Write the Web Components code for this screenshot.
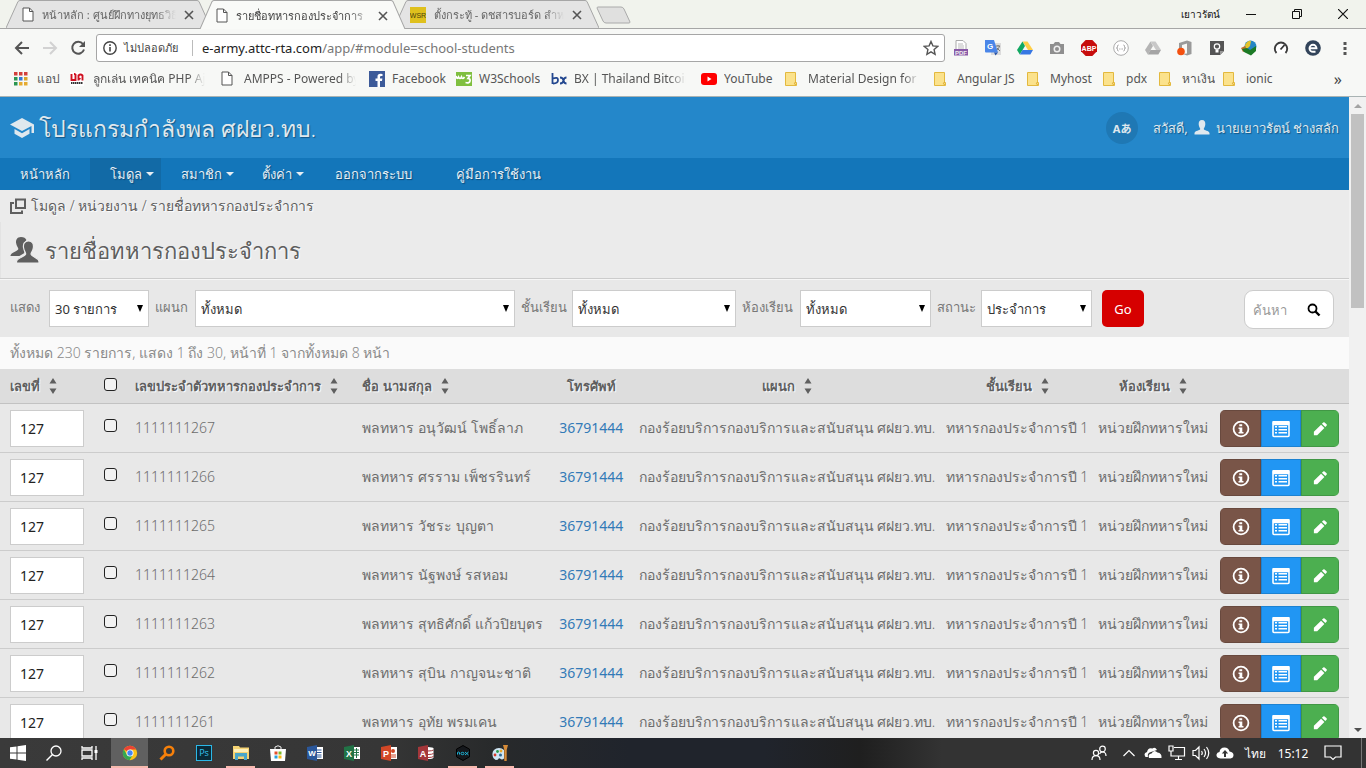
<!DOCTYPE html>
<html lang="th">
<head>
<meta charset="utf-8">
<title>รายชื่อทหารกองประจำการ</title>
<style>
html,body{margin:0;height:100%;overflow:hidden}
body{font-family:"Noto Sans","Open Sans",sans-serif;font-size:12px;color:#5a5a5a}
</style>
</head>
<body>
<desktop-screen>
  <browser-frame slot="window"><school-app></school-app></browser-frame>
  <task-bar slot="taskbar"></task-bar>
</desktop-screen>
<script>
const ICONS = {
 doc:['0 0 12 16','<path d="M1 1h6.5L11 4.5V14H1z" fill="#fff" stroke="#555"/><path d="M7.5 1v3.5H11" fill="none" stroke="#555"/>'],
 wsr:['0 0 16 16','<rect width="16" height="16" fill="#dfc01d"/><text x="8" y="11" font-family="Liberation Sans" font-size="7" text-anchor="middle" fill="#4b420d">WSR</text>'],
 x:['0 0 10 10','<path d="M1 1l8 8M9 1L1 9" stroke="#555" stroke-width="1.6"/>'],
 back:['0 0 16 16','<path d="M15 8H2M8 2L2 8l6 6" fill="none" stroke="#555" stroke-width="2"/>'],
 fwd:['0 0 16 16','<path d="M1 8h13M8 2l6 6-6 6" fill="none" stroke="#d2d2d2" stroke-width="2"/>'],
 reload:['0 0 16 16','<path d="M13 4A6 6 0 1 0 14 9.5" fill="none" stroke="#555" stroke-width="2"/><path d="M15 1v6H9z" fill="#555"/>'],
 info:['0 0 16 16','<circle cx="8" cy="8" r="6.2" fill="none" stroke="#444" stroke-width="1.4"/><path d="M7.2 7h1.6v4.5H7.2zM7.2 4.3h1.6V6H7.2z" fill="#444"/>'],
 star:['0 0 16 16','<path d="M8 1.5l1.9 4.4 4.8.5-3.6 3.2 1 4.7L8 11.9l-4.100 2.400 1-4.700L1.300 6.400l4.800-.5z" fill="none" stroke="#555" stroke-width="1.400"/>'],
 pdf:['0 0 16 16','<path d="M3 9V.5h7L13 3.500V9" fill="#fff" stroke="#aaa"/><path d="M5 4h5M5 6h6M5 8h6" stroke="#bbb"/><rect x="1" y="9" width="14" height="6.500" fill="#8a5aa8"/><text x="8" y="14.500" text-anchor="middle" font-family="Liberation Sans" font-weight="bold" font-size="6" fill="#eee">PDF</text>'],
 gtr:['0 0 16 16','<rect x="6" y="3" width="10" height="12" fill="#dcdcdc"/><path d="M0 0h9l4 12.500H1a1 1 0 0 1-1-1z" fill="#4a86e8"/><path d="M9 12.500h4L10.500 15.500z" fill="#2a56a8"/><text x="5" y="9" text-anchor="middle" font-family="Liberation Sans" font-weight="bold" font-size="8" fill="#fff">G</text><path d="M11 6h4M13 5v1M14.500 6c-.4 2-1.500 3-2.500 4M12 8l3 3" stroke="#777" fill="none"/>'],
 drive:['0 0 16 16','<path d="M5.500 1.500h5L16 10h-5z" fill="#ffcf48"/><path d="M5.500 1.500L8 6 2.800 14.500 0 10z" fill="#11a861"/><path d="M5.500 10H16l-2.700 4.500H2.800z" fill="#3777e3"/>'],
 driveg:['0 0 16 16','<path d="M5.500 1.500h5L16 10h-5z" fill="#c8c8c8"/><path d="M5.500 1.500L8 6 2.800 14.500 0 10z" fill="#b4b4b4"/><path d="M5.500 10H16l-2.700 4.500H2.800z" fill="#a5a5a5"/>'],
 cam:['0 0 16 16','<path d="M1 4h3.500L6 2h4l1.500 2H15v10H1z" fill="#8f8f8f"/><circle cx="8" cy="9" r="3.500" fill="#eee"/><circle cx="8" cy="9" r="2" fill="#8f8f8f"/>'],
 abp:['0 0 16 16','<path d="M4.700 0h6.600L16 4.700v6.600L11.300 16H4.700L0 11.300V4.700z" fill="#c70d0d"/><text x="8" y="10.500" text-anchor="middle" font-family="Liberation Sans" font-weight="bold" font-size="7" fill="#fff">ABP</text>'],
 json:['0 0 16 16','<circle cx="8" cy="8" r="7.300" fill="#fff" stroke="#aaa"/><path d="M5.500 5Q4.500 5 4.500 6.500T3.500 8Q4.500 8 4.500 9.500T5.500 11M10.500 5q1 0 1 1.500T12.500 8q-1 0-1 1.500t-1 1.500M6.300 9h.8M7.700 9h.8M9.100 9h.8" fill="none" stroke="#999"/>'],
 office:['0 0 16 16','<path d="M2 3L10 .5 14.500 2v12L10 15.500 6 14l4-.5V3.500L5 5v6H2z" fill="#9a9a9a"/><circle cx="4" cy="11.500" r="3.800" fill="#f4500f"/>'],
 bulb:['0 0 16 16','<path d="M1 1h14v10l-4 4H1z" fill="#555"/><path d="M15 11l-4 4v-4z" fill="#999"/><circle cx="8" cy="6.500" r="2.700" fill="none" stroke="#fff" stroke-width="1.200"/><path d="M6.500 9.500h3V12.500h-3z" fill="#fff"/>'],
 idm:['0 0 16 16','<circle cx="9.500" cy="6.500" r="6" fill="#2586c6"/><path d="M4 5q3-5 6-4l-1 5-4 4z" fill="#e4c42c"/><path d="M0 8l4-2 2 4-4 2z" fill="#c0702a"/><path d="M1 9l5-1 3 2 6-4v5l-5 4.500L3 12z" fill="#1c7a25"/>'],
 gauge:['0 0 16 16','<circle cx="8" cy="8" r="6" fill="#fff"/><path d="M3.500 13a6.200 6.200 0 1 1 9 0" fill="none" stroke="#3c3c3c" stroke-width="1.900"/><path d="M7.500 9.500L11.500 5" stroke="#333" stroke-width="1.800"/>'],
 ecirc:['0 0 16 16','<circle cx="8" cy="8" r="7.800" fill="#32445a"/><path d="M4.500 8.300h7A3.500 3.500 0 1 0 8 11.800h2.500" fill="none" stroke="#fff" stroke-width="1.900"/>'],
 dots:['0 0 16 16','<path d="M6.500 2h3v3h-3zM6.500 7h3v3h-3zM6.500 12h3v3h-3z" fill="#555"/>'],
 apps:['0 0 14 14','<path d="M0 0h3.500v3.500H0zM5 0h3.500v3.500H5zM10 0h3.500v3.500H10z" fill="#d2403c"/><path d="M0 5h3.500v3.500H0z" fill="#2a9650"/><path d="M5 5h3.500v3.500H5z" fill="#3577d2"/><path d="M10 5h3.500v3.500H10z" fill="#d6a32c"/><path d="M0 10h3.500v3.500H0z" fill="#2a9650"/><path d="M5 10h3.500v3.500H5zM10 10h3.500v3.500H10z" fill="#e5ab31"/>'],
 nxx:['0 0 14 14','<rect width="14" height="14" fill="#fff"/><path d="M1.500 2v6h4V2M4 2h1.500M8.500 8.500V3.500q2-2 4 0V8.500M8.500 6l2 1" fill="none" stroke="#cf1020" stroke-width="1.900"/><path d="M1 11h12" stroke="#333" stroke-width="2" stroke-dasharray="1.500 .5"/>'],
 fb:['0 0 16 16','<rect width="16" height="16" fill="#3c5a99"/><path d="M11 16V10h2l.4-2.400H11V6q0-1 1.200-1h1.300V3Q8.500 2 8.500 5.500v2.100h-2V10h2v6z" fill="#fff"/>'],
 w3:['0 0 16 14','<rect width="16" height="14" fill="#7fbf3f"/><path d="M0 4q1 4 2.500 1 1.500 3 3 0 1 3 3 0M10 3.500h4l-2 3q2.500 0 2 2.500t-4.500 1.500" fill="none" stroke="#fff" stroke-width="1.700"/>'],
 bx:['0 0 16 16','<path d="M1.500 2v11M2 7.500q5-2 5 1.500t-5 3.500M9 6.500q3 0 3.500 3t3 3M15.500 6.500q-2.500 0-3 3t-3.500 3" fill="none" stroke="#23478f" stroke-width="1.800"/>'],
 yt:['0 0 16 14','<rect y="1" width="16" height="12" rx="3" fill="#f00"/><path d="M6.500 4.500v5l4-2.500z" fill="#fff"/>'],
 folder:['0 0 12 14','<path d="M.5.5h10v10h1v3H.5z" fill="#fbe28c" stroke="#e3b93e"/><path d="M10.500 10q-2 1 0 3" fill="none" stroke="#dba726"/>'],
 cap:['0 0 24 20','<path d="M12 0L0 6.500 12 13l9.500-5v7H24V6.500z"/><path d="M4.500 11v4.700L12 20l7.500-4.300V11L12 15.200z"/>'],
 user:['0 0 16 15','<path d="M8 0C5.500 0 4.500 2 4.700 4.500S6 8 6.300 9C6 10.500 1 10.500.500 13v1.500h15V13C15 10.500 10 10.500 9.700 9c.3-1 1.400-2 1.600-4.500S10.500 0 8 0z"/>'],
 windows:['0 0 16 17','<path d="M6 1.500h9v8.500H6z" fill="none" stroke="currentColor" stroke-width="2"/><path d="M4 5H1v10h11V12.500" fill="none" stroke="currentColor" stroke-width="2"/>'],
 users:['0 0 30 27','<path d="M11 0c-4 0-5.300 3-4.900 6s2 4 2.300 6c-.5 2.500-7.500 3-8 7h9l5-3-1-9 3-4C15.500 1 14 0 11 0z"/><path d="M18.500 4c-4 0-5.500 3-5 6.500s2 4.500 2.200 6.500c-.5 3-8.200 3-9.200 7.500V26h22.500v-1.500c-1-4.500-7.500-4.500-8-7.500.3-2 2-3 2.400-6.500S22.500 4 18.500 4z" stroke="#ebebeb" stroke-width="1.200"/>'],
 search:['0 0 14 14','<circle cx="5.500" cy="5.500" r="4" fill="none" stroke="currentColor" stroke-width="1.800"/><path d="M8.500 8.500l4 4" stroke="currentColor" stroke-width="2.400"/>'],
 sort:['0 0 8 16','<path d="M4 0l3.500 5.500h-7zM4 16l3.500-5.500h-7z"/>'],
 caret:['0 0 8 4','<path d="M0 0h8L4 4z"/>'],
 drop:['0 0 6 7','<path d="M0 0h6L3 7z"/>'],
 iinfo:['0 0 18 18','<circle cx="9" cy="9" r="7.400" fill="none" stroke="currentColor" stroke-width="1.800"/><path d="M7.300 4.300h2.900v2H7.300zM6.500 7.500h3.800v4.600h1.200v1.500H6.500v-1.500h1V9h-1z"/>'],
 list:['0 0 18 18','<path d="M1 4.500V15.500a1 1 0 0 0 1 1h14a1 1 0 0 0 1-1V4.500z" fill="none" stroke="currentColor" stroke-width="1.600"/><path d="M.2 2q0-1 1-1h15.600q1 0 1 1v2H.2zM3 6h2v1.500H3zM6.500 6H15v1.500H6.500zM3 9h2v1.500H3zM6.500 9H15v1.500H6.500zM3 12h2v1.500H3zM6.500 12H15v1.500H6.500z"/>'],
 pencil:['0 0 16 16','<path d="M1 11.200L9.200 3 13 6.800 4.800 15H1zM10.200 2l1.500-1.500q.8-.7 1.600 0L15.500 2.700q.7.800 0 1.600L14 5.800z"/>'],
 win:['0 0 16 16','<path d="M0 2.300l6.500-.9V7.500H0zM7.500 1.200L16 0v7.500H7.500zM0 8.500h6.500v6.100L0 13.700zM7.500 8.500H16V16l-8.500-1.200z"/>'],
 find:['0 0 16 16','<circle cx="10" cy="6" r="5" fill="none" stroke="currentColor" stroke-width="1.300"/><path d="M6.500 9.500L.5 15.500" stroke="currentColor" stroke-width="1.400"/>'],
 task:['0 0 18 16','<path d="M1 1v2h10V1M1 15v-2h10v2M1 5h10v6H1zM15 1v14" fill="none" stroke="currentColor" stroke-width="1.300"/><path d="M13.500 5h3v3h-3z"/>'],
 chrome:['0 0 16 16','<circle cx="8" cy="8" r="7.200" fill="#fbc116"/><path d="M8 8L1.800 4.200A7.200 7.200 0 0 1 14.200 4.500H8z" fill="#ea4335"/><path d="M1.800 4.200A7.200 7.200 0 0 0 7.500 15.200L11 9.800 5 10z" fill="#34a853"/><circle cx="8" cy="8" r="3.500" fill="#fff"/><circle cx="8" cy="8" r="2.700" fill="#4285f4"/>'],
 osearch:['0 0 16 16','<circle cx="10" cy="6" r="4.300" fill="none" stroke="#f7800a" stroke-width="2.600"/><path d="M7 9L1.500 14.500" stroke="#f7800a" stroke-width="3"/>'],
 ps:['0 0 16 16','<rect x=".5" y=".5" width="15" height="15" fill="#0b2a38" stroke="#2bb8e8"/><text x="8" y="11" text-anchor="middle" font-family="Open Sans" font-size="9" fill="#35c5f2">Ps</text>'],
 explorer:['0 0 16 16','<path d="M0 1h6l1 1.500h9V14H0z" fill="#f5d373"/><path d="M1 4h14v3H1z" fill="#fff0b8"/><path d="M2 15V8h12v7h-3v-3.500H5V15z" fill="#49a6c9"/>'],
 store:['0 0 16 16','<path d="M5 4V2q3-2.500 6 0v2" fill="none" stroke="#eee"/><path d="M0 4h16l-1 12H1z" fill="#fff"/><path d="M4.500 6.500h3v3h-3z" fill="#e5502c"/><path d="M8.500 6.500h3v3h-3z" fill="#7dba28"/><path d="M4.500 10.500h3v3h-3z" fill="#28a0dd"/><path d="M8.500 10.500h3v3h-3z" fill="#fab914"/>'],
 word:['0 0 16 16','<path d="M8 2h8v12H8z" fill="#fff"/><path d="M10 5h4.500M10 7.500h4.500M10 10h4.500M10 12h4.500" stroke="#2b579a"/><path d="M0 2L10 0v16L0 14z" fill="#2b579a"/><text x="5" y="11" text-anchor="middle" font-family="Liberation Sans" font-weight="bold" font-size="8" fill="#fff">W</text>'],
 excel:['0 0 16 16','<path d="M8 2h8v12H8z" fill="#fff"/><path d="M10 5h5M10 7.500h5M10 10h5M12.500 3v10" stroke="#217346"/><path d="M0 2L10 0v16L0 14z" fill="#217346"/><text x="5" y="11.500" text-anchor="middle" font-family="Liberation Sans" font-weight="bold" font-size="9" fill="#fff">X</text>'],
 ppt:['0 0 16 16','<path d="M8 2h8v12H8z" fill="#fff"/><circle cx="12" cy="6" r="2" fill="#d24726"/><path d="M10 10h5M10 12h5" stroke="#d24726"/><path d="M0 2L10 0v16L0 14z" fill="#d24726"/><text x="5" y="11.500" text-anchor="middle" font-family="Liberation Sans" font-weight="bold" font-size="9" fill="#fff">P</text>'],
 access:['0 0 16 16','<path d="M10 2q5 0 5.500 1.500v9Q15 14 10 14z" fill="#fff"/><path d="M10 6q4 0 5.500-1M10 9.500q4 0 5.500-1M10 12.500q4 0 5.500-1" stroke="#a4373a" fill="none"/><path d="M0 2L10 0v16L0 14z" fill="#a4373a"/><text x="5" y="11.500" text-anchor="middle" font-family="Liberation Sans" font-weight="bold" font-size="9" fill="#fff">A</text>'],
 nox:['0 0 16 16','<path d="M8 .5l6.500 3.700v7.600L8 15.500 1.500 11.800V4.200z" fill="#15181c" stroke="#000"/><path d="M2.500 9.500V7.500q1.500-1 2 0v2M6 8.500a1.500 1.200 0 1 0 3 0 1.500 1.200 0 1 0-3 0M10 7l3.500 3M13.500 7L10 10" fill="none" stroke="#1bb4d8"/>'],
 paint:['0 0 16 16','<path d="M7 3a6.500 6 0 0 0-6.500 7C1 15 5 15.500 6 14.500q1-2 2-1 2 2 4 0V5Q10 3 7 3z" fill="#cfe6f4"/><circle cx="5.500" cy="6.500" r="1.400" fill="#2d9b49"/><circle cx="9" cy="6" r="1.400" fill="#e8a92a"/><circle cx="3" cy="10" r="1.400" fill="#d9392a"/><circle cx="8.500" cy="10" r="1.500" fill="#2f6a95"/><path d="M11 0h5l-1.300 5v11h-2.400V5z" fill="#d58b38"/>'],
 people:['0 0 16 16','<circle cx="11.500" cy="4" r="2.800"/><circle cx="5" cy="8" r="2.600"/><path d="M1 15q0-4.300 4-4.300T9 15M8.500 9q1-2 3-2 3.500 0 3.500 4"/>','s'],
 up:['0 0 14 14','<path d="M1.500 10L7 4.500l5.500 5.500"/>','s'],
 onedrive:['0 0 18 14','<path d="M1.500 11Q-1 7 3 6 4 1 8.500 2.500 11 .500 13 4L7 6q-4 1-3 5z"/><path d="M5 12Q3.500 8 7.500 7.500 10 3 13.500 6.500 18 7 17.500 12z"/>'],
 net:['0 0 18 16','<path d="M6 2.500h10.500v8.500H4M10.500 11v3.500M7 14.500h7M1 1h4v5H1zM3 6v5h2"/>','s'],
 sound:['0 0 18 16','<path d="M1 5.500h2.500L7 2v12l-3.500-3.500H1zM9.500 6q1.500 2 0 4M12 4q3 4 0 8M14.500 2q4.500 6 0 12"/>','s'],
 cloudup:['0 0 18 14','<path d="M4.500 12.500Q0 12 .500 8.500 1 6 3.500 6 4 1.500 8.500 1.500 12.500 1.500 13.500 5.500 17.500 6 17.500 9q0 3-3 3.500z"/><path d="M8 11V7.500H5.800L9 4l3.200 3.500H10V11z" fill="#333"/>'],
 note:['0 0 18 16','<path d="M1 1h16v11h-5.500L9 14.500 6.500 12H1z"/>','s'],
 min:['0 0 10 10','<path d="M0 5.500h10" stroke="#111"/>'],
 max:['0 0 10 10','<path d="M2.500 2.500v-2h7v7h-2M.5 2.500h7v7h-7z" fill="none" stroke="#111"/>'],
 close:['0 0 10 10','<path d="M0 0l10 10M10 0L0 10" stroke="#111" stroke-width="1.200"/>'],
 arrup:['0 0 8 4','<path d="M4 0l4 4H0z"/>']
};
class UiIcon extends HTMLElement{
 connectedCallback(){
  const r=this.shadowRoot||this.attachShadow({mode:'open'});
  const [vb,body,mode]=ICONS[this.getAttribute('name')];
  const [, ,w,h]=vb.split(' ');
  const W=this.getAttribute('w')||w,H=this.getAttribute('h')||h;
  r.innerHTML=`<style>:host{display:inline-flex;flex:none}svg{display:block;fill:currentColor}svg.s{fill:none;stroke:currentColor;stroke-width:1.2}</style><svg class="${mode||''}" aria-hidden="true" width="${W}" height="${H}" viewBox="${vb}">${body}</svg>`;
 }}
customElements.define('ui-icon',UiIcon);

function define(name,html,after){
 const t=document.createElement('template');t.innerHTML=html;
 customElements.define(name,class extends HTMLElement{
  connectedCallback(){
   if(this.shadowRoot)return;
   this.attachShadow({mode:'open'});
   this.shadowRoot.append(t.content.cloneNode(true));
   if(after)after.call(this,this.shadowRoot);
  }});
}

define('desktop-screen',`<style>
:host{display:grid;grid-template-rows:minmax(0,1fr) auto;height:100vh;overflow:hidden}
</style><slot name="window"></slot><slot name="taskbar"></slot>`);

define('browser-tab',`<style>
:host{display:flex;align-items:center;position:relative;isolation:isolate;flex:0 1 205px;min-width:0;height:28px;margin-right:-11px;box-sizing:border-box;padding:2px 17px 0 16px;gap:8px;color:#666;--tab:#e4e4e4}
:host([active]){z-index:2;color:#444;--tab:#f9faf8}
.bg{position:absolute;inset:0;width:100%;height:100%;z-index:-1}
.t{flex:1;min-width:0;white-space:nowrap;overflow:hidden;font-size:11px;line-height:18px;mask-image:linear-gradient(90deg,#000 85%,transparent)}
button{border:0;background:none;padding:0;display:flex}
</style><svg class="bg" viewBox="0 0 205 28" preserveAspectRatio="none" aria-hidden="true"><path d="M0 28L12 1.500Q13 .500 14 .500H191Q192 .500 193 1.500L205 28" fill="var(--tab)" stroke="#a6a6a6"/></svg>
<slot name="icon"></slot><span class="t"><slot></slot></span><button aria-label="ปิดแท็บ"><ui-icon name="x"></ui-icon></button>`);

define('bookmark-item',`<style>
:host{display:block;flex:0 0 auto}
a{display:flex;align-items:center;color:#555;text-decoration:none;font-size:12px;line-height:18px}
.i{display:flex;width:23px;flex:none}
.t{white-space:nowrap;overflow:hidden}
.fade{mask-image:linear-gradient(90deg,#000 85%,transparent)}
</style><a href="#"><span class="i"></span><span class="t"><slot></slot></span></a>`,function(r){
 this.style.width=this.getAttribute('width')+'px';
 r.querySelector('.i').innerHTML=`<ui-icon name="${this.getAttribute('icon')}"></ui-icon>`;
 const t=r.querySelector('.t');
 if(this.hasAttribute('fade')){t.classList.add('fade');t.style.width='112px'}
});

define('browser-frame',`<style>
:host{display:grid;grid-template-rows:29px 37px 31px minmax(0,1fr);min-height:0;background:#f7f8f6;color:#444}
.tabs{display:flex;background:#f1f3ed;border-bottom:1px solid #a6a6a6;padding-left:6px;align-items:stretch;box-sizing:border-box;min-width:0}
.tabs browser-tab[active]{margin-bottom:-1px;height:29px}
.new{margin:6px 0 0 8px;border:0;background:none;padding:0;height:18px}
.sys{margin-left:auto;display:flex;align-items:center;height:28px;padding-right:18px}
.sys button{border:0;background:none;padding:0;display:flex;width:10px;margin-left:36px}
.sys b{font-weight:400;font-size:10px;color:#111;margin-right:-10px}
.bar{display:flex;align-items:center;padding:0 13px 0 14px}
.bar>button{border:0;background:none;padding:0;display:flex;margin-right:12px}
.bar>button:nth-of-type(3){margin-right:10px}
.omni{flex:1;display:flex;align-items:center;height:28px;box-sizing:border-box;border:1px solid #a6a6a6;border-radius:3px;background:#fff;padding:0 5px;min-width:0;font-size:13px;white-space:nowrap}
.omni .safe{margin-left:6px;padding-right:14px;font-size:11px;line-height:16px;border-right:1px solid #bbb}
.omni .url{flex:1;margin-left:9px;color:#777;line-height:20px;font-size:13px}
.url b{font-weight:400;color:#222}
.ext{display:flex;gap:16px;margin-left:8px}
.marks{display:flex;align-items:center;padding:0 24px 4px 14px;border-bottom:1px solid #a9b3b3;overflow:hidden}
.more{margin-left:auto;font-size:16px;line-height:18px}
.view{display:flex;min-height:0}
.page{flex:1;min-width:0;overflow:hidden}
.scroll{flex:0 0 17px;display:grid;grid-template-rows:17px minmax(0,1fr) 17px;background:#f1f1f1;justify-items:center;align-items:center;color:#a3a3a3}
.thumb{align-self:start;width:13px;height:32%;background:#c1c1c1}
.dn{transform:rotate(180deg);color:#505050}
</style>
<div class="tabs"><browser-tab><ui-icon slot="icon" name="doc"></ui-icon>หน้าหลัก : ศูนย์ฝึกทางยุทธวิธี</browser-tab><browser-tab active><ui-icon slot="icon" name="doc"></ui-icon>รายชื่อทหารกองประจำการ</browser-tab><browser-tab><ui-icon slot="icon" name="wsr"></ui-icon>ตั้งกระทู้ - ดชสารบอร์ด สำหรับ</browser-tab>
<button class="new" aria-label="แท็บใหม่"><svg width="35" height="18" viewBox="0 0 35 18" aria-hidden="true"><path d="M1 2Q1 1 2 1h23q2 0 3 2l6 13q0 1-1 1H10q-2 0-3-2z" fill="#e0e0df" stroke="#aaa"/></svg></button>
<div class="sys"><b>เยาวรัตน์</b><button aria-label="ย่อ"><ui-icon name="min"></ui-icon></button><button aria-label="ขยาย"><ui-icon name="max"></ui-icon></button><button aria-label="ปิด"><ui-icon name="close"></ui-icon></button></div></div>
<div class="bar"><button aria-label="ย้อนกลับ"><ui-icon name="back"></ui-icon></button><button aria-label="ไปข้างหน้า"><ui-icon name="fwd"></ui-icon></button><button aria-label="โหลดใหม่"><ui-icon name="reload"></ui-icon></button>
<div class="omni"><ui-icon name="info"></ui-icon><span class="safe">ไม่ปลอดภัย</span><span class="url"><b>e-army.attc-rta.com</b>/app/#module=school-students</span><ui-icon name="star"></ui-icon></div>
<div class="ext"></div></div>
<nav class="marks">
<bookmark-item icon="apps" width="56">แอป</bookmark-item><bookmark-item icon="nxx" width="151" fade>ลูกเล่น เทคนิค PHP Ajax</bookmark-item><bookmark-item icon="doc" width="148" fade>AMPPS - Powered by</bookmark-item><bookmark-item icon="fb" width="87">Facebook</bookmark-item><bookmark-item icon="w3" width="95">W3Schools</bookmark-item><bookmark-item icon="bx" width="150" fade>BX | Thailand Bitcoin E</bookmark-item><bookmark-item icon="yt" width="84">YouTube</bookmark-item><bookmark-item icon="folder" width="149" fade>Material Design for Bo</bookmark-item><bookmark-item icon="folder" width="93">Angular JS</bookmark-item><bookmark-item icon="folder" width="76">Myhost</bookmark-item><bookmark-item icon="folder" width="56">pdx</bookmark-item><bookmark-item icon="folder" width="64">หาเงิน</bookmark-item><bookmark-item icon="folder" width="50">ionic</bookmark-item><span class="more">»</span></nav>
<div class="view"><div class="page"><slot></slot></div><div class="scroll"><ui-icon name="arrup"></ui-icon><div class="thumb"></div><ui-icon class="dn" name="arrup"></ui-icon></div></div>`,function(r){
 r.querySelector('.ext').innerHTML=['pdf','gtr','drive','cam','abp','json','driveg','office','bulb','idm','gauge','ecirc','dots'].map(n=>`<ui-icon name="${n}"></ui-icon>`).join('');
});

define('nav-item',`<style>
:host{display:block;height:32px}
:host([active]){background:#126aa6}
a{display:flex;align-items:center;gap:4px;height:32px;padding-left:20px;color:#e6eef4;text-decoration:none;font-size:13px;line-height:20px;white-space:nowrap;text-shadow:1px 1px 1px #0a4a78}
</style><a href="#"><slot></slot></a>`,function(r){
 if(this.hasAttribute('menu'))r.querySelector('a').insertAdjacentHTML('beforeend','<ui-icon name="caret"></ui-icon>');
 if(this.hasAttribute('width'))this.style.width=this.getAttribute('width')+'px';
});

define('app-header',`<style>
:host{display:block;color:#dfe8ee}
header{display:flex;align-items:center;height:61px;padding:0 10px;background:#2487ca;text-shadow:1px 1px 1px #155786}
h1{display:flex;align-items:center;gap:5px;margin:0;font-weight:300;font-size:23px;line-height:32px;white-space:nowrap}
.lang{margin-left:auto;width:32px;height:32px;border:0;border-radius:50%;background:#1f78b4;color:#dfe8ee;font:bold 11px "Noto Sans","Noto Sans CJK JP",sans-serif;padding:0}
.me{display:flex;align-items:center;gap:6px;margin-left:15px;font-size:13px;line-height:20px;white-space:nowrap;color:inherit}
.me a{display:flex;gap:6px;align-items:center;color:inherit;text-decoration:none}
nav{display:flex;background:#1376ba}
</style><header><h1><ui-icon name="cap"></ui-icon>โปรแกรมกำลังพล ศฝยว.ทบ.</h1><button class="lang">Aあ</button><div class="me">สวัสดี, <a href="#"><ui-icon name="user"></ui-icon>นายเยาวรัตน์ ช่างสลัก</a></div></header>
<nav><nav-item width="90">หน้าหลัก</nav-item><nav-item active menu width="71">โมดูล</nav-item><nav-item menu width="81">สมาชิก</nav-item><nav-item menu width="73">ตั้งค่า</nav-item><nav-item width="121">ออกจากระบบ</nav-item><nav-item>คู่มือการใช้งาน</nav-item></nav>`);

define('filter-select',`<style>
:host{display:flex;gap:5px;flex:none}
label{color:#777;font-size:13px;line-height:34px;white-space:nowrap}
.box{position:relative}
select{appearance:none;width:100%;height:37px;border:1px solid #ccc;border-radius:0;background:#fff;color:#333;padding:0 5px;font:inherit;font-size:13px}
ui-icon{position:absolute;right:6px;top:15px;pointer-events:none;color:#000}
</style><label for="s"></label><div class="box"><select id="s"><option></option></select><ui-icon name="drop"></ui-icon></div>`,function(r){
 const g=n=>this.getAttribute(n);
 r.querySelector('label').textContent=g('label');
 r.querySelector('label').style.width=g('lw')+'px';
 r.querySelector('.box').style.width=g('sw')+'px';
 r.querySelector('option').textContent=g('value');
});

define('filter-bar',`<style>
:host{display:flex;gap:6px;padding:10px 15px 8px 10px;background:#e8e8e8;align-items:flex-start}
.go{width:42px;height:37px;margin-left:4px;border:0;border-radius:5px;background:#d60000;color:#fff;font:inherit;font-size:13px;padding:0}
.search{display:flex;align-items:center;margin-left:auto;width:90px;height:39px;box-sizing:border-box;border:1px solid #ccc;border-radius:9px;background:#fff;padding:0 12px 0 8px}
input{flex:1;min-width:0;border:0;padding:0;background:none;font:inherit;font-size:13px;outline:0}
input::placeholder{color:#999}
.search button{border:0;background:none;padding:0;display:flex;color:#000}
</style>
<filter-select label="แสดง" value="30 รายการ" lw="34" sw="100"></filter-select><filter-select label="แผนก" value="ทั้งหมด" lw="35" sw="320"></filter-select><filter-select label="ชั้นเรียน" value="ทั้งหมด" lw="46" sw="164"></filter-select><filter-select label="ห้องเรียน" value="ทั้งหมด" lw="53" sw="131"></filter-select><filter-select label="สถานะ" value="ประจำการ" lw="39" sw="111"></filter-select><button class="go">Go</button>
<div class="search"><input aria-label="ค้นหา" placeholder="ค้นหา"><button aria-label="ค้นหา"><ui-icon name="search"></ui-icon></button></div>`);

define('student-table',`<style>
:host{display:block}
table{border-collapse:separate;border-spacing:0;table-layout:fixed;width:100%;font-size:14px;font-weight:300;line-height:20px;color:#6c6c6c}
th{height:35px;box-sizing:border-box;background:#ddd;border-bottom:1px solid #c2c2c2;padding:0 8px;font-size:13px;font-weight:600;color:#5f5f5f;text-shadow:1px 1px 1px #fff;white-space:nowrap}
th,td{text-align:center}
th span{display:inline-flex;align-items:center;gap:9px}
td{height:49px;box-sizing:border-box;background:#e8e8e8;border-bottom:1px solid #ccc;padding:0;white-space:nowrap}
.l{text-align:left}
td.l,th.l{padding-left:8px}
td:nth-child(4),th:nth-child(4){padding-left:6px}
tr>:first-child{padding-left:10px;text-align:left}
tr>:nth-child(2){text-align:left;padding:0 0 0 10px}
td:last-child{text-align:left;padding-left:7px}
.n{width:74px;height:37px;box-sizing:border-box;border:1px solid #ccc;background:#fff;padding:0 9px;font:inherit;font-weight:400;color:#222;display:block}
.c{appearance:none;width:13px;height:13px;border:1px solid #222;border-radius:3px;background:#f2f2f2;margin:0 0 4px;display:block}
td .c{margin-bottom:6px}
a{color:#337ab7;text-decoration:none;font-size:14px;font-weight:400}
.g{display:inline-flex;border-radius:5px;overflow:hidden;vertical-align:middle}
.g button{height:37px;border:1px solid #0002;color:#fff;display:flex;align-items:center;justify-content:center;padding:2px 0 0}
.g button:nth-child(1){width:41px;background:#795548}.g button:nth-child(2){width:40px;background:#2196f3}.g button:nth-child(3){width:38px;background:#4caf50}
col:nth-child(1){width:94px}col:nth-child(2){width:33px}col:nth-child(3){width:17%}col:nth-child(4){width:auto}col:nth-child(5){width:6%}col:nth-child(6){width:23%}col:nth-child(7){width:150px}col:nth-child(8){width:121px}col:nth-child(9){width:136px}
</style><table><colgroup><col><col><col><col><col><col><col><col><col></colgroup><thead><tr><th><span>เลขที่<ui-icon name="sort"></ui-icon></span></th><th><input class="c" type="checkbox" aria-label="เลือกทั้งหมด"></th><th class="l"><span>เลขประจำตัวทหารกองประจำการ<ui-icon name="sort"></ui-icon></span></th><th class="l"><span>ชื่อ นามสกุล<ui-icon name="sort"></ui-icon></span></th><th>โทรศัพท์</th><th><span>แผนก<ui-icon name="sort"></ui-icon></span></th><th><span>ชั้นเรียน<ui-icon name="sort"></ui-icon></span></th><th><span>ห้องเรียน<ui-icon name="sort"></ui-icon></span></th><th></th></tr></thead><tbody></tbody></table>`,function(r){
 const names=['อนุวัฒน์ โพธิ์ลาภ','ศรราม เพ็ชรรินทร์','วัชระ บุญตา','นัฐพงษ์ รสหอม','สุทธิศักดิ์ แก้วปิยบุตร','สุบิน กาญจนะชาติ','อุทัย พรมเคน'];
 r.querySelector('tbody').innerHTML=names.map((n,i)=>`<tr><td><input class="n" value="127" aria-label="เลขที่"></td><td><input class="c" type="checkbox" aria-label="เลือก"></td><td class="l">${1111111267-i}</td><td class="l">พลทหาร ${n}</td><td><a href="#">36791444</a></td><td>กองร้อยบริการกองบริการและสนับสนุน ศฝยว.ทบ.</td><td>ทหารกองประจำการปี 1</td><td>หน่วยฝึกทหารใหม่</td><td><div class="g"><button aria-label="รายละเอียด"><ui-icon name="iinfo"></ui-icon></button><button aria-label="รายการ"><ui-icon name="list"></ui-icon></button><button aria-label="แก้ไข"><ui-icon name="pencil" w="14" h="14"></ui-icon></button></div></td></tr>`).join('');
});

define('school-app',`<style>
:host{display:block;background:#e8e8e8;color:#5f5f5f}
.crumb{display:flex;align-items:center;gap:5px;height:32px;padding-left:10px;background:#ebebeb;font-size:14px;font-weight:300;line-height:20px;text-shadow:1px 1px 1px #fff}
.crumb a{color:inherit;text-decoration:none}
h2{display:flex;align-items:center;gap:5px;margin:0;height:56px;box-sizing:border-box;padding-left:9px;background:#ebebeb;border-left:1px solid #e3e3e3;font-weight:300;font-size:22px;line-height:30px;text-shadow:1px 1px 1px #fff}
.line{height:1px;background:#ccc;border-bottom:1px solid #f6f6f6}
.sum{height:32px;background:#fafafa;color:#8a8a8a;font-size:14px;font-weight:300;line-height:32px;padding-left:10px}
</style><app-header></app-header>
<nav class="crumb"><ui-icon name="windows"></ui-icon><span><a href="#">โมดูล</a> / <a href="#">หน่วยงาน</a> / รายชื่อทหารกองประจำการ</span></nav>
<h2><ui-icon name="users"></ui-icon>รายชื่อทหารกองประจำการ</h2><div class="line"></div>
<filter-bar></filter-bar><div class="sum">ทั้งหมด 230 รายการ, แสดง 1 ถึง 30, หน้าที่ 1 จากทั้งหมด 8 หน้า</div>
<student-table></student-table>`);

define('task-bar',`<style>
:host{display:flex;height:30px;background:linear-gradient(90deg,#3a3a3a,#363636 28%,#282a2b 36%,#20242c 46%,#20242c 56%,#1f1f1f 63%,#333 69%,#333);color:#fff;font-size:12px}
button{border:0;background:none;color:inherit;font:inherit;display:flex;align-items:center;justify-content:center;padding:0;flex:none}
.apps{display:flex}
.apps button{width:37px;position:relative}
.apps .sys{width:36px}
.apps .act{background:#606060;margin-left:3px}
.apps .run::after{content:"";position:absolute;left:4px;right:4px;bottom:0;height:2px;background:#f7b9ae}
.apps .act::after{left:0;right:0}
.tray{margin-left:auto;display:flex;align-items:center}
.tray button{height:30px;width:24px}
.tray .p{margin-right:6px}
.tray .l{width:36px}.tray .t{width:40px}.tray .n{width:40px}
.end{width:4px;height:30px;border-left:1px solid #777;margin-left:8px}
</style><div class="apps"></div><div class="tray"><button class="p" aria-label="ผู้คน"><ui-icon name="people"></ui-icon></button><button aria-label="เพิ่มเติม"><ui-icon name="up"></ui-icon></button><button aria-label="OneDrive"><ui-icon name="onedrive"></ui-icon></button><button aria-label="เครือข่าย"><ui-icon name="net"></ui-icon></button><button aria-label="เสียง"><ui-icon name="sound"></ui-icon></button><button aria-label="สำรองข้อมูล"><ui-icon name="cloudup"></ui-icon></button><button class="l">ไทย</button><button class="t">15:12</button><button class="n" aria-label="การแจ้งเตือน"><ui-icon name="note"></ui-icon></button><span class="end"></span></div>`,function(r){
 const a=[['win','sys'],['find','sys'],['task','sys'],['chrome','run act'],['osearch',''],['ps',''],['explorer','run'],['store',''],['word',''],['excel',''],['ppt',''],['access',''],['nox','run'],['paint','run']];
 r.querySelector('.apps').innerHTML=a.map(([n,c])=>`<button class="${c}" aria-label="${n}"><ui-icon name="${n}"></ui-icon></button>`).join('');
});
</script>
</body>
</html>
